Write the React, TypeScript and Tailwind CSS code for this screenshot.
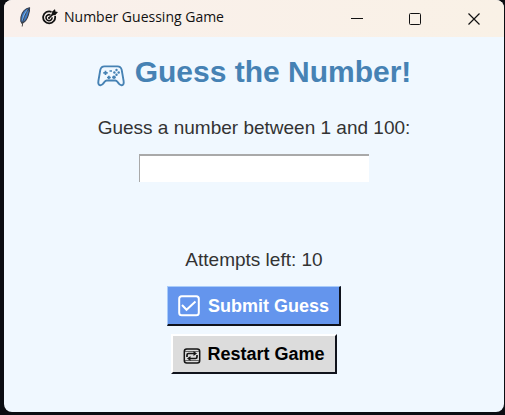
import { useState } from "react";

function FeatherIcon() {
  return (
    <svg viewBox="0 0 14 20" className="h-5 w-3.5" aria-hidden="true">
      <path d="M11.500.8C7.500 1.300 4 5 3 10l-.2 4 1.200 2.200c3-1.200 5.200-4.300 6.200-7.800 1-2.500 1.600-5 1.300-7.600z" fill="#3c78c4" stroke="#3a4250" strokeWidth="1.200" />
      <path d="M9.500 3.500C7 6 5.500 9.500 5 13.500" stroke="#79b5f0" strokeWidth="1.700" fill="none" />
      <path d="M10.800 2C7.500 6 4.800 12 4.200 19.500" stroke="#3a3835" strokeWidth=".9" fill="none" />
    </svg>
  );
}

function TargetIcon() {
  return (
    <svg viewBox="0 0 16 16" className="size-4" fill="none" stroke="#111" aria-hidden="true">
      <path d="M9.500 2.800A6 6 0 1 0 13 7" strokeWidth="1.800" />
      <path d="M8.400 6A3 3 0 1 0 10 8.300" strokeWidth="1.600" />
      <path d="M7 9l5-5" strokeWidth="1.700" />
      <circle cx="7" cy="9" r="1.100" fill="#111" stroke="none" />
      <path d="M10 6l.2-3.200L12.800.6l.5 2.100 2.200.5L13.200 5.900z" fill="#111" stroke="#111" strokeWidth=".5" />
    </svg>
  );
}

function GamepadIcon() {
  return (
    <svg viewBox="0 0 28 22" className="h-[22px] w-7" fill="none" stroke="#4682b4" strokeLinejoin="round" aria-hidden="true">
      <path d="M7.500 1.400h13c2.300 0 3.700 1.300 4.200 3.500l1.900 11c.5 2.700-.4 4.200-1.900 4.400-1.900.3-3.200-2-4.300-3.500-.7-1-1.300-1.300-2.200-1.300H9.800c-.9 0-1.500.3-2.200 1.300-1.100 1.500-2.400 3.800-4.300 3.500-1.500-.2-2.400-1.700-1.900-4.400l1.900-11c.5-2.200 1.900-3.500 4.200-3.500z" strokeWidth="1.900" />
      <path d="M6.300 7.800h4.400M8.500 5.700v4.200M10 12.500h3.800M11.900 10.800v3.400M12.500 6h2.500" strokeWidth="1.700" />
      <circle cx="17" cy="12.300" r="1.800" fill="#4682b4" stroke="none" />
      <g fill="#4682b4" stroke="none">
        <circle cx="19.500" cy="5" r="1.200" />
        <circle cx="17.400" cy="7.500" r="1.200" />
        <circle cx="21.700" cy="7.500" r="1.200" />
        <circle cx="19.500" cy="9.800" r="1.200" />
      </g>
    </svg>
  );
}

function CheckBoxIcon() {
  return (
    <svg viewBox="0 0 22 22" className="size-[22px]" fill="none" stroke="white" strokeWidth="2" aria-hidden="true">
      <rect x="1.200" y="1.200" width="19.600" height="19" rx="2.500" />
      <path d="M4 10l4.500 4.800L17.500 6.500" />
    </svg>
  );
}

function RestartIcon() {
  return (
    <svg viewBox="0 0 18 16" className="h-4 w-[18px]" fill="none" stroke="#151515" aria-hidden="true">
      <rect x="1.300" y="1" width="15.400" height="14" rx="2.500" strokeWidth="1.500" />
      <path d="M2 3.500h14M2 12.500h14" strokeWidth="1" stroke="#666" />
      <path d="M4 9V7q0-1.500 1.500-1.500h6M14 7v2q0 1.500-1.500 1.500h-6" strokeWidth="1.700" />
      <path d="M10.500 3l3.500 2.500L10.500 8zM7.500 8L4 10.500 7.500 13z" fill="#151515" stroke="none" />
    </svg>
  );
}

export default function App() {
  const [guess, setGuess] = useState("");
  const [attempts, setAttempts] = useState(10);

  const submit = () => {
    if (guess) setAttempts((n) => Math.max(0, n - 1));
  };
  const restart = () => {
    setGuess("");
    setAttempts(10);
  };

  return (
    <div className="min-h-screen bg-[#0b0d12] pr-px pb-[3px] pl-1">
      <div className="flex min-h-[412px] flex-col overflow-hidden rounded-lg bg-[#f0f8ff]">
        <header className="flex h-[37px] items-center bg-linear-to-r from-[#f9f0ec] to-[#f9f1e6] pl-3.5">
          <span className="flex h-full items-center gap-1.5 pb-1">
            <span className="mr-1"><FeatherIcon /></span>
            <TargetIcon />
            <span className="font-['Open_Sans',sans-serif] text-sm text-[#111]">Number Guessing Game</span>
          </span>
          <div className="ml-auto flex h-full">
            <button type="button" aria-label="Minimize" className="grid w-[58px] place-items-center">
              <svg viewBox="0 0 12 12" className="size-3" stroke="#111" aria-hidden="true"><path d="M0 5.500h12" /></svg>
            </button>
            <button type="button" aria-label="Maximize" className="grid w-[58px] place-items-center">
              <svg viewBox="0 0 12 12" className="size-3" fill="none" stroke="#111" aria-hidden="true"><rect x=".5" y=".5" width="11" height="11" rx="1" /></svg>
            </button>
            <button type="button" aria-label="Close" className="grid w-[60px] place-items-center">
              <svg viewBox="0 0 12 12" className="size-3" stroke="#111" strokeWidth="1.200" aria-hidden="true"><path d="M.5.5l11 11M11.500.5l-11 11" /></svg>
            </button>
          </div>
        </header>

        <main className="flex flex-col items-center pt-[17px] font-['Liberation_Sans',Arial,sans-serif]">
          <h1 className="flex items-center gap-2.5 text-[30px] leading-9 font-bold text-[#4682b4]">
            <span className="pt-2"><GamepadIcon /></span>
            Guess the Number!
          </h1>
          <label htmlFor="guess" className="mt-[26px] text-[19px] leading-6 text-[#333]">Guess a number between 1 and 100:</label>
          <input
            id="guess"
            type="text"
            inputMode="numeric"
            value={guess}
            onChange={(e) => setGuess(e.target.value)}
            className="mt-3.5 h-7 w-[230px] border-t-2 border-l border-[#a9a9a9] bg-white px-1 text-center text-[19px] text-[#333] outline-none"
          />
          <p className="mt-[66px] text-[19px] leading-6 text-[#333]">Attempts left: {attempts}</p>
          <button
            type="button"
            onClick={submit}
            className="mt-3.5 flex h-10 items-center gap-2 border-t border-r-2 border-b-2 border-l border-t-[#a9ccfa] border-r-[#10131c] border-b-[#10131c] border-l-[#a9ccfa] bg-[#6495ed] px-2.5 text-lg font-bold text-white"
          >
            <CheckBoxIcon />
            Submit Guess
          </button>
          <button
            type="button"
            onClick={restart}
            className="mt-2 flex h-10 items-center gap-1.5 border-t-2 border-r-2 border-b-2 border-l-2 border-t-white border-r-[#10131c] border-b-[#10131c] border-l-white bg-[#dcdcdc] px-2.5 text-lg font-bold text-black"
          >
            <span className="pt-1"><RestartIcon /></span>
            Restart Game
          </button>
        </main>
      </div>
    </div>
  );
}
